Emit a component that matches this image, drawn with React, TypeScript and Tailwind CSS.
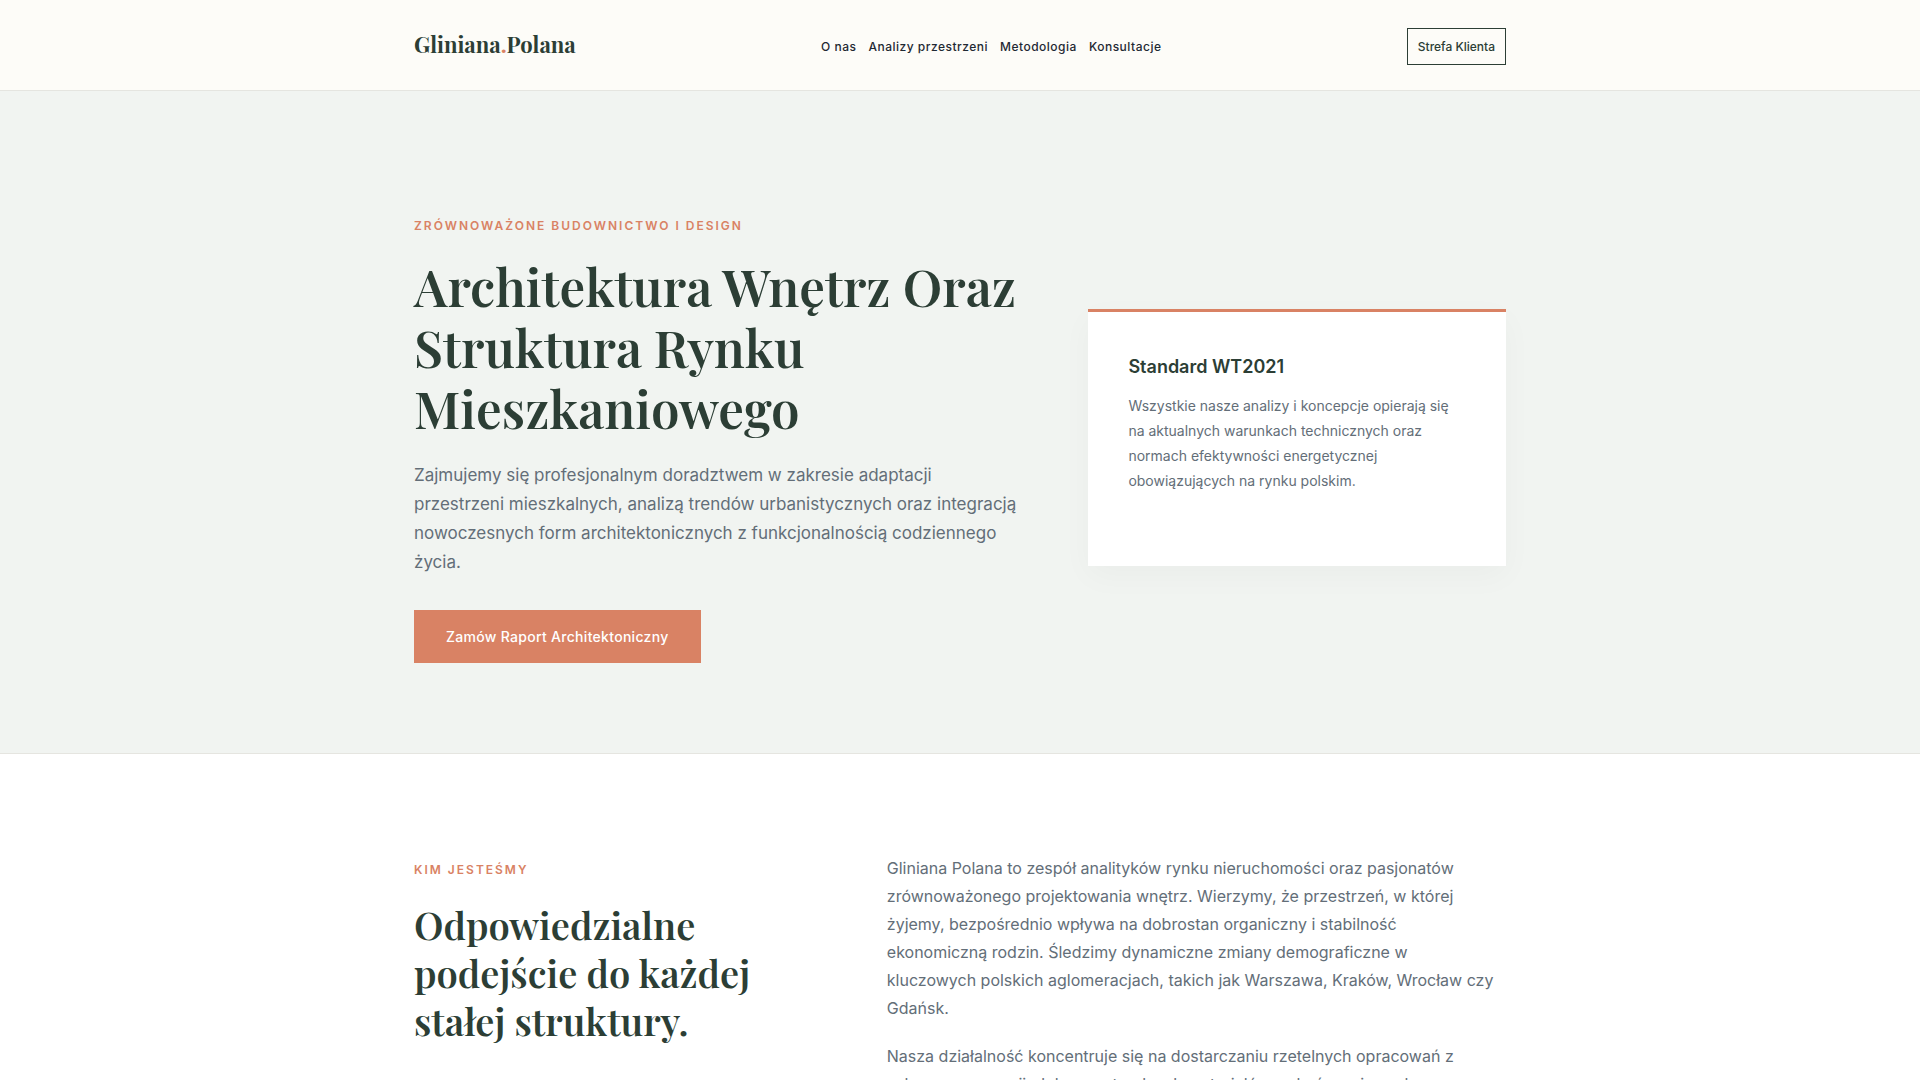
const serif = "font-['Playfair_Display','Liberation_Serif',serif]";

const navItems = ['O nas', 'Analizy przestrzeni', 'Metodologia', 'Konsultacje'];

export default function App() {
  return (
    <div className="h-screen overflow-hidden bg-white font-['Inter',sans-serif] text-[#1f2933]">
      <header className="border-b border-[#e5e5e0] bg-[#fdfcf8] pt-7 pb-[25px]">
        <div className="mx-auto flex max-w-[1140px] items-center justify-between px-6">
          <a href="#" className={`${serif} pb-1 text-[22px] font-bold leading-[31px] text-[#2c3e35]`}>
            Gliniana<span className="text-[#d98264]">.</span>Polana
          </a>
          <nav className="flex gap-3 text-xs font-medium tracking-[0.5px]">
            {navItems.map((item) => (
              <a key={item} href="#">{item}</a>
            ))}
          </nav>
          <button type="button" className="border border-[#2c3e35] px-2.5 py-2 text-xs font-medium leading-[19px] text-[#2c3e35]">
            Strefa Klienta
          </button>
        </div>
      </header>

      <section className="border-b border-[#e5e5e0] bg-[#f1f4f1] pt-[120px] pb-[90px]">
        <div className="mx-auto grid max-w-[1140px] grid-cols-[3fr_2fr] items-center gap-12 px-6">
          <div>
            <p className="mb-[15px] text-xs font-semibold uppercase leading-[30px] tracking-[2px] text-[#d98264]">
              Zrównoważone budownictwo i design
            </p>
            <h1 className={`${serif} mb-[22px] text-[51px] font-semibold leading-[61px] text-[#2c3e35]`}>
              Architektura Wnętrz Oraz Struktura Rynku Mieszkaniowego
            </h1>
            <p className="mb-[33px] max-w-[608px] text-[17px] leading-[29px] text-[#636e78]">
              Zajmujemy się profesjonalnym doradztwem w zakresie adaptacji przestrzeni mieszkalnych, analizą
              trendów urbanistycznych oraz integracją nowoczesnych form architektonicznych z funkcjonalnością
              codziennego życia.
            </p>
            <button type="button" className="bg-[#d98264] px-8 py-4 text-sm font-medium leading-[21px] tracking-[0.3px] text-white">
              Zamów Raport Architektoniczny
            </button>
          </div>
          <aside className="border-t-[3px] border-[#d98264] bg-white px-10 pt-10 pb-[73px] shadow-[0_10px_30px_rgba(0,0,0,0.03)]">
            <h2 className="mb-3 text-lg font-semibold leading-[29px] text-[#2c3e35]">Standard WT2021</h2>
            <p className="text-sm leading-[25px] text-[#636e78]">
              Wszystkie nasze analizy i koncepcje opierają się na aktualnych warunkach technicznych oraz normach
              efektywności energetycznej obowiązujących na rynku polskim.
            </p>
          </aside>
        </div>
      </section>

      <section className="py-[100px]">
        <div className="mx-auto grid max-w-[1140px] grid-cols-[2fr_3fr] gap-15 px-6">
          <div>
            <p className="mb-[15px] text-xs font-semibold uppercase leading-8 tracking-[2px] text-[#d98264]">Kim jesteśmy</p>
            <h2 className={`${serif} text-[38px] font-semibold leading-[48px] text-[#2c3e35]`}>
              Odpowiedzialne podejście do każdej stałej struktury.
            </h2>
          </div>
          <div className="max-w-[610px] space-y-5 text-base leading-7 text-[#636e78]">
            <p>
              Gliniana Polana to zespół analityków rynku nieruchomości oraz pasjonatów zrównoważonego projektowania
              wnętrz. Wierzymy, że przestrzeń, w której żyjemy, bezpośrednio wpływa na dobrostan organiczny i
              stabilność ekonomiczną rodzin. Śledzimy dynamiczne zmiany demograficzne w kluczowych polskich
              aglomeracjach, takich jak Warszawa, Kraków, Wrocław czy Gdańsk.
            </p>
            <p>
              Nasza działalność koncentruje się na dostarczaniu rzetelnych opracowań z zakresu ergonomii, doboru
              naturalnych materiałów wykończeniowych oraz kształtowania ładu przestrzennego.
            </p>
          </div>
        </div>
      </section>
    </div>
  );
}
